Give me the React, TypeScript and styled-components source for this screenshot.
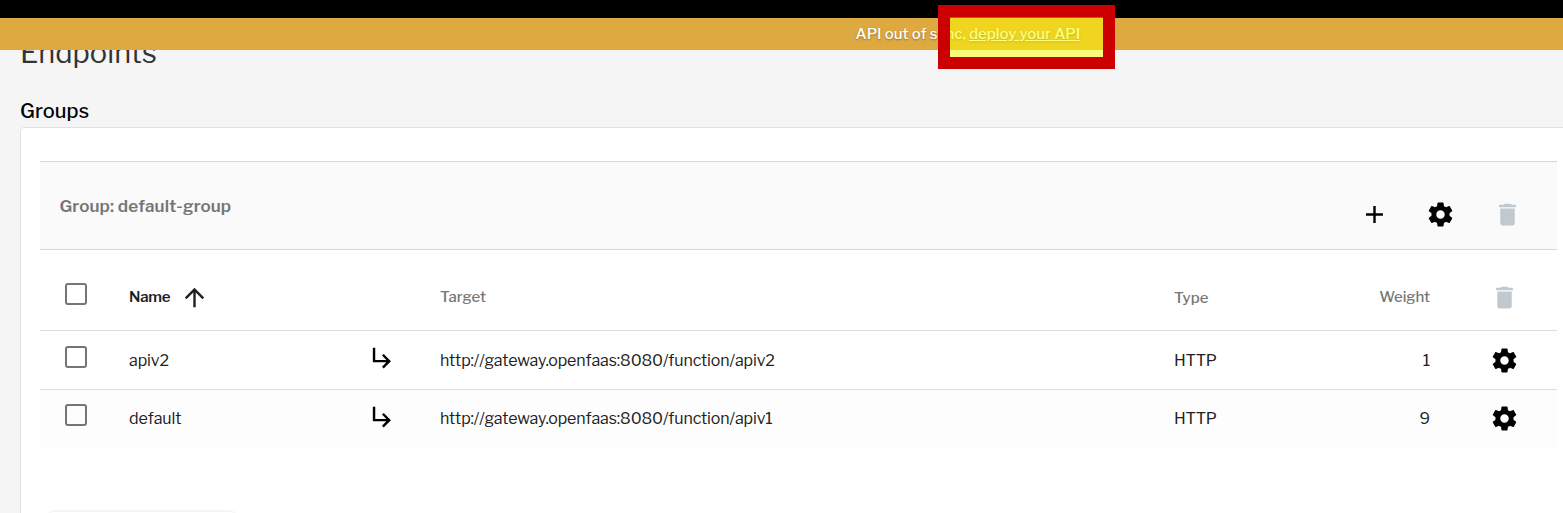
import React from "react";
import styled, { createGlobalStyle } from "styled-components";
import { MdAdd, MdArrowUpward, MdDelete, MdSubdirectoryArrowRight } from "react-icons/md";

const GlobalStyle = createGlobalStyle`
  * { box-sizing: border-box; }
  body {
    margin: 0;
    background: #f5f5f5;
    font-family: "Libre Franklin", "Open Sans", "Liberation Sans", sans-serif;
    color: #212121;
  }
`;

const Page = styled.div`
  position: relative;
  display: flex;
  flex-direction: column;
  height: 513px;
  overflow: hidden;
`;

const TopBar = styled.div`
  flex: none;
  height: 18px;
  background: #000;
`;

const Banner = styled.div`
  flex: none;
  z-index: 1;
  height: 32px;
  padding-left: 855.5px;
  background: #dea941;
  color: #fff;
  font-size: 15px;
  font-weight: 500;
  line-height: 32px;
  white-space: nowrap;
  letter-spacing: 0.01px;
  text-shadow: 0 1px 2px rgba(0, 0, 0, 0.35);
`;

const DeployLink = styled.a`
  color: inherit;
  text-decoration: underline;
`;

const Highlight = styled.div`
  position: absolute;
  z-index: 2;
  left: 938px;
  top: 5px;
  width: 177px;
  height: 64px;
  border: 12px solid #c00;
  background: rgba(255, 255, 0, 0.5);
  background-clip: padding-box;
`;

const Content = styled.main`
  flex: none;
  display: flex;
  flex-direction: column;
  padding-left: 20px;
`;

const Title = styled.h1`
  margin: -14px 0 0;
  height: 60px;
  font-size: 29px;
  font-weight: 400;
  line-height: 34px;
  color: #333;
`;

const Subtitle = styled.h2`
  margin: 0;
  height: 31px;
  font-size: 20px;
  font-weight: 500;
  line-height: 30px;
  letter-spacing: 0.1px;
  color: #000;
`;

const Card = styled.section`
  height: 480px;
  width: 1560px;
  padding: 33px 0 0 19px;
  border: 1px solid #dee2e6;
  border-radius: 4px;
  background: #fff;
`;

const GroupBar = styled.header`
  display: flex;
  width: 1517px;
  height: 89px;
  padding: 0 35px 0 19.5px;
  border: solid #d8d8d8;
  border-width: 1px 0;
  background: #fafafa;
`;

const GroupName = styled.div`
  flex: 1;
  font-size: 17px;
  font-weight: 600;
  line-height: 89px;
  letter-spacing: 0.11px;
  color: #757575;
`;

const Actions = styled.div`
  display: flex;
  align-items: center;
  gap: 37px;
  padding-top: 18px;
  color: #000;
`;

const DeleteAction = styled.span`
  display: flex;
  margin-left: 1px;
  color: #c1c9d0;
`;

const Row = styled.div<{ $h: number; $last?: boolean }>`
  display: grid;
  grid-template-columns: 89px 238px 73px 734px 156px 100px 127px;
  align-items: center;
  width: 1517px;
  height: ${(p) => p.$h}px;
  border-bottom: 1px solid ${(p) => (p.$last ? "transparent" : "#dedede")};
  background: ${(p) => (p.$last ? "#fdfdfd" : "#fff")};
  background-clip: padding-box;
`;

const Check = styled.span<{ $lift: number }>`
  width: 22px;
  height: 22px;
  margin: 0 0 ${(p) => p.$lift}px 25px;
  border: 2px solid #757575;
  border-radius: 3px;
`;

const Head = styled.span<{ $active?: boolean; $right?: boolean; $top?: number }>`
  display: flex;
  align-items: center;
  justify-content: ${(p) => (p.$right ? "flex-end" : "flex-start")};
  gap: 10px;
  padding-top: ${(p) => p.$top ?? 14}px;
  font-size: 15px;
  font-weight: ${(p) => (p.$active ? 600 : 500)};
  line-height: 20px;
  letter-spacing: ${(p) => (p.$active ? -0.2 : -0.03)}px;
  color: ${(p) => (p.$active ? "#212121" : "#757575")};
`;

const Cell = styled.span<{ $right?: boolean; $spacing?: number; $top?: number }>`
  padding-top: ${(p) => p.$top ?? 0}px;
  font-size: 16px;
  font-weight: 400;
  line-height: 24px;
  white-space: nowrap;
  text-align: ${(p) => (p.$right ? "right" : "left")};
  letter-spacing: ${(p) => p.$spacing ?? -0.1}px;
`;

const IconCell = styled.span<{ $indent: number; $color?: string; $top?: number; $bottom?: number }>`
  display: flex;
  padding: ${(p) => p.$top ?? 0}px 0 ${(p) => p.$bottom ?? 0}px ${(p) => p.$indent}px;
  color: ${(p) => p.$color ?? "#000"};
`;

const ButtonRow = styled.div`
  padding: 63px 0 0 10px;
`;

const FloatingButton = styled.div`
  width: 184px;
  height: 40px;
  border-radius: 3px;
  background: #fff;
  box-shadow: 0 1px 4px rgba(0, 0, 0, 0.2);
`;

const Gear = () => (
  <svg width="29" height="29" viewBox="0 0 24 24" fill="currentColor">
    <path d="M19.43 12.98c.04-.32.07-.64.07-.98s-.03-.66-.07-.98l2.11-1.65c.19-.15.24-.42.12-.64l-2-3.46c-.12-.22-.39-.3-.61-.22l-2.49 1c-.52-.4-1.08-.73-1.69-.98l-.38-2.65C14.46 2.18 14.25 2 14 2h-4c-.25 0-.46.18-.49.42l-.38 2.65c-.61.25-1.17.59-1.69.98l-2.49-1c-.23-.09-.49 0-.61.22l-2 3.46c-.13.22-.07.49.12.64l2.11 1.65c-.04.32-.07.65-.07.98s.03.66.07.98l-2.11 1.65c-.19.15-.24.42-.12.64l2 3.46c.12.22.39.3.61.22l2.49-1c.52.4 1.08.73 1.69.98l.38 2.65c.03.24.24.42.49.42h4c.25 0 .46-.18.49-.42l.38-2.65c.61-.25 1.17-.59 1.69-.98l2.49 1c.23.09.49 0 .61-.22l2-3.46c.12-.22.07-.49-.12-.64l-2.11-1.65zM12 15.5c-1.93 0-3.5-1.57-3.5-3.5s1.57-3.5 3.5-3.5 3.5 1.57 3.5 3.5-1.57 3.5-3.5 3.5z" />
  </svg>
);

const endpoints = [
  { name: "apiv2", target: "http://gateway.openfaas:8080/function/apiv2", type: "HTTP", weight: 1 },
  { name: "default", target: "http://gateway.openfaas:8080/function/apiv1", type: "HTTP", weight: 9 },
];

export default function App() {
  return (
    <Page>
      <GlobalStyle />
      <TopBar />
      <Banner>
        API out of sync, <DeployLink>deploy your API</DeployLink>
      </Banner>
      <Highlight />
      <Content>
        <Title>Endpoints</Title>
        <Subtitle>Groups</Subtitle>
        <Card>
          <GroupBar>
            <GroupName>Group: default-group</GroupName>
            <Actions>
              <MdAdd size={29} />
              <Gear />
              <DeleteAction>
                <MdDelete size={29} />
              </DeleteAction>
            </Actions>
          </GroupBar>
          <Row $h={81}>
            <Check $lift={-7} />
            <Head $active>
              Name <MdArrowUpward size={29} />
            </Head>
            <span />
            <Head>Target</Head>
            <Head $top={16}>Type</Head>
            <Head $right>Weight</Head>
            <IconCell $indent={60} $color="#c1c9d0" $top={15}>
              <MdDelete size={29} />
            </IconCell>
          </Row>
          {endpoints.map((e, i) => {
            const last = i === endpoints.length - 1;
            const top = last ? 0 : 2;
            return (
              <Row key={e.name} $h={59} $last={last}>
                <Check $lift={last ? 8 : 6} />
                <Cell $top={top}>{e.name}</Cell>
                <IconCell $indent={1} $bottom={last ? 6 : 5}>
                  <MdSubdirectoryArrowRight size={29} />
                </IconCell>
                <Cell $top={top} $spacing={-0.115}>{e.target}</Cell>
                <Cell $top={top} $spacing={-0.2}>{e.type}</Cell>
                <Cell $top={top} $right>{e.weight}</Cell>
                <IconCell $indent={60} $bottom={last ? 2 : 0}>
                  <Gear />
                </IconCell>
              </Row>
            );
          })}
          <ButtonRow>
            <FloatingButton />
          </ButtonRow>
        </Card>
      </Content>
    </Page>
  );
}
